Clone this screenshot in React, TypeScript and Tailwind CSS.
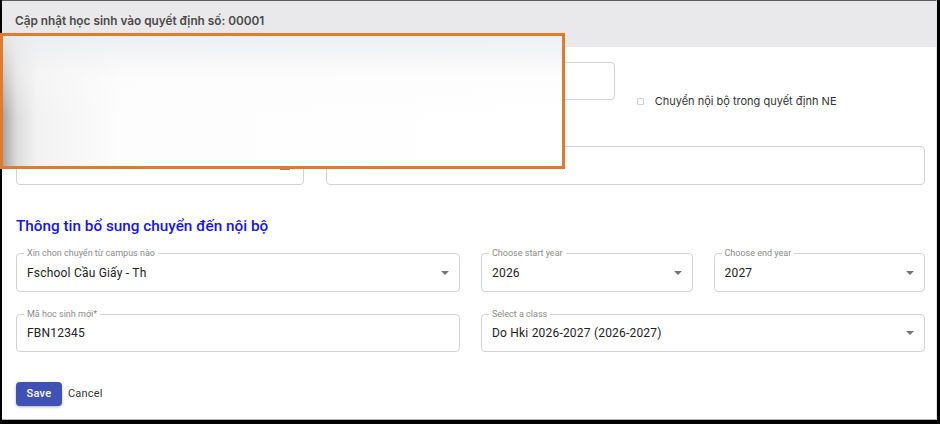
import { ReactNode } from 'react';

const ROBOTO = "font-['Roboto','Liberation_Sans',sans-serif]";

function DropArrow() {
  return (
    <svg width="8" height="4" viewBox="0 0 10 5" className="shrink-0">
      <path d="M0 0l5 5 5-5z" fill="#757575" />
    </svg>
  );
}

function Field({
  label,
  value,
  select,
  className = '',
  children,
}: {
  label?: string;
  value?: string;
  select?: boolean;
  className?: string;
  children?: ReactNode;
}) {
  return (
    <div
      className={`relative flex items-center justify-between rounded-[4px] border border-[#d2d2d2] pl-[10px] pr-[10px] ${className}`}
    >
      {label && (
        <span className="absolute -top-[6px] left-[7px] bg-white px-[3px] text-[9px] leading-[11px] text-[#8a8a8a]">
          {label}
        </span>
      )}
      <span className="text-[12px] tracking-[0.2px] text-[#222]">{value}</span>
      {select && <DropArrow />}
      {children}
    </div>
  );
}

export default function App() {
  return (
    <div className={`relative h-[424px] w-[940px] bg-black pb-[4px] pl-[2px] pr-[3px] ${ROBOTO}`}>
      <div className="h-full border-t border-r border-b border-t-[#5a5a5a] border-r-[#e2e2e2] border-b-[#b5b5b5] bg-white">
        {/* Dialog title */}
        <div className="h-[46px] bg-[#e9e9eb] pl-[13px] pt-[12px]">
          <h2 className="font-['Inter',sans-serif] text-[11.8px] font-semibold leading-[16px] text-[#4a4a4a]">
            Cập nhật học sinh vào quyết định số: 00001
          </h2>
        </div>

        <div className="ml-[14px] w-[909px]">
          {/* Transfer details */}
          <div className="mt-[15px] grid grid-cols-3 gap-x-[22px]">
            <Field className="h-[38px]" />
            <Field className="h-[38px]" />
            <label className="flex translate-y-[8px] items-center gap-[11px] self-end font-['Inter',sans-serif] text-[11px] leading-[13px] text-[#333]">
              <span className="h-[7px] w-[7px] rounded-[1px] border border-[#cfcfcf]" />
              <span>Chuyển nội bộ trong quyết định NE</span>
            </label>
          </div>

          <div className="mt-[46px] grid grid-cols-3 gap-x-[22px]">
            <Field className="h-[39px]">
              <svg width="10" height="10" viewBox="0 0 10 10" className="absolute right-[13px] top-[13px]">
                <rect x="0.5" y="1.5" width="9" height="8" fill="none" stroke="#888" />
                <rect x="0" y="8" width="10" height="2" fill="#888" />
              </svg>
            </Field>
            <Field className="col-span-2 h-[39px]" />
          </div>

          <h3 className="mt-[31px] text-[15.3px] font-medium leading-[20px] text-[#1515ea]">
            Thông tin bổ sung chuyển đến nội bộ
          </h3>

          {/* Internal transfer fields */}
          <div className="mt-[17px] grid grid-cols-4 gap-x-[21px] gap-y-[22px]">
            <Field
              className="col-span-2 h-[39px]"
              label="Xin chon chuyển từ campus nào"
              value="Fschool Cầu Giấy - Th"
              select
            />
            <Field className="h-[39px]" label="Choose start year" value="2026" select />
            <Field className="h-[39px]" label="Choose end year" value="2027" select />
            <Field className="col-span-2 h-[38px]" label="Mã hoc sinh mới*" value="FBN12345" />
            <Field
              className="col-span-2 h-[38px]"
              label="Select a class"
              value="Do Hki 2026-2027 (2026-2027)"
              select
            />
          </div>

          <div className="mt-[30px] flex items-center gap-[5px]">
            <button className="h-[24px] w-[46px] rounded-[4px] bg-[#3f51b5] text-[11px] font-medium tracking-[0.3px] text-white shadow-[0_1px_3px_rgba(0,0,0,0.3)]">
              Save
            </button>
            <button className="px-[1px] text-[11px] tracking-[0.2px] text-[#333]">Cancel</button>
          </div>
        </div>
      </div>

      {/* Redaction box over the student details */}
      <div className="absolute left-0 top-[33px] h-[136px] w-[565px] border-[3px] border-[#e07b2c] bg-[linear-gradient(to_right,#a6a6a6_0px,#dcdcdc_14px,#f2f2f2_34px,#fdfdfd_120px,#ffffff_100%)]">
        <div className="h-full w-full bg-[linear-gradient(to_bottom,rgba(236,237,240,0.9)_0px,rgba(250,250,250,0.4)_40px,rgba(255,255,255,0)_80px)]" />
      </div>
    </div>
  );
}
